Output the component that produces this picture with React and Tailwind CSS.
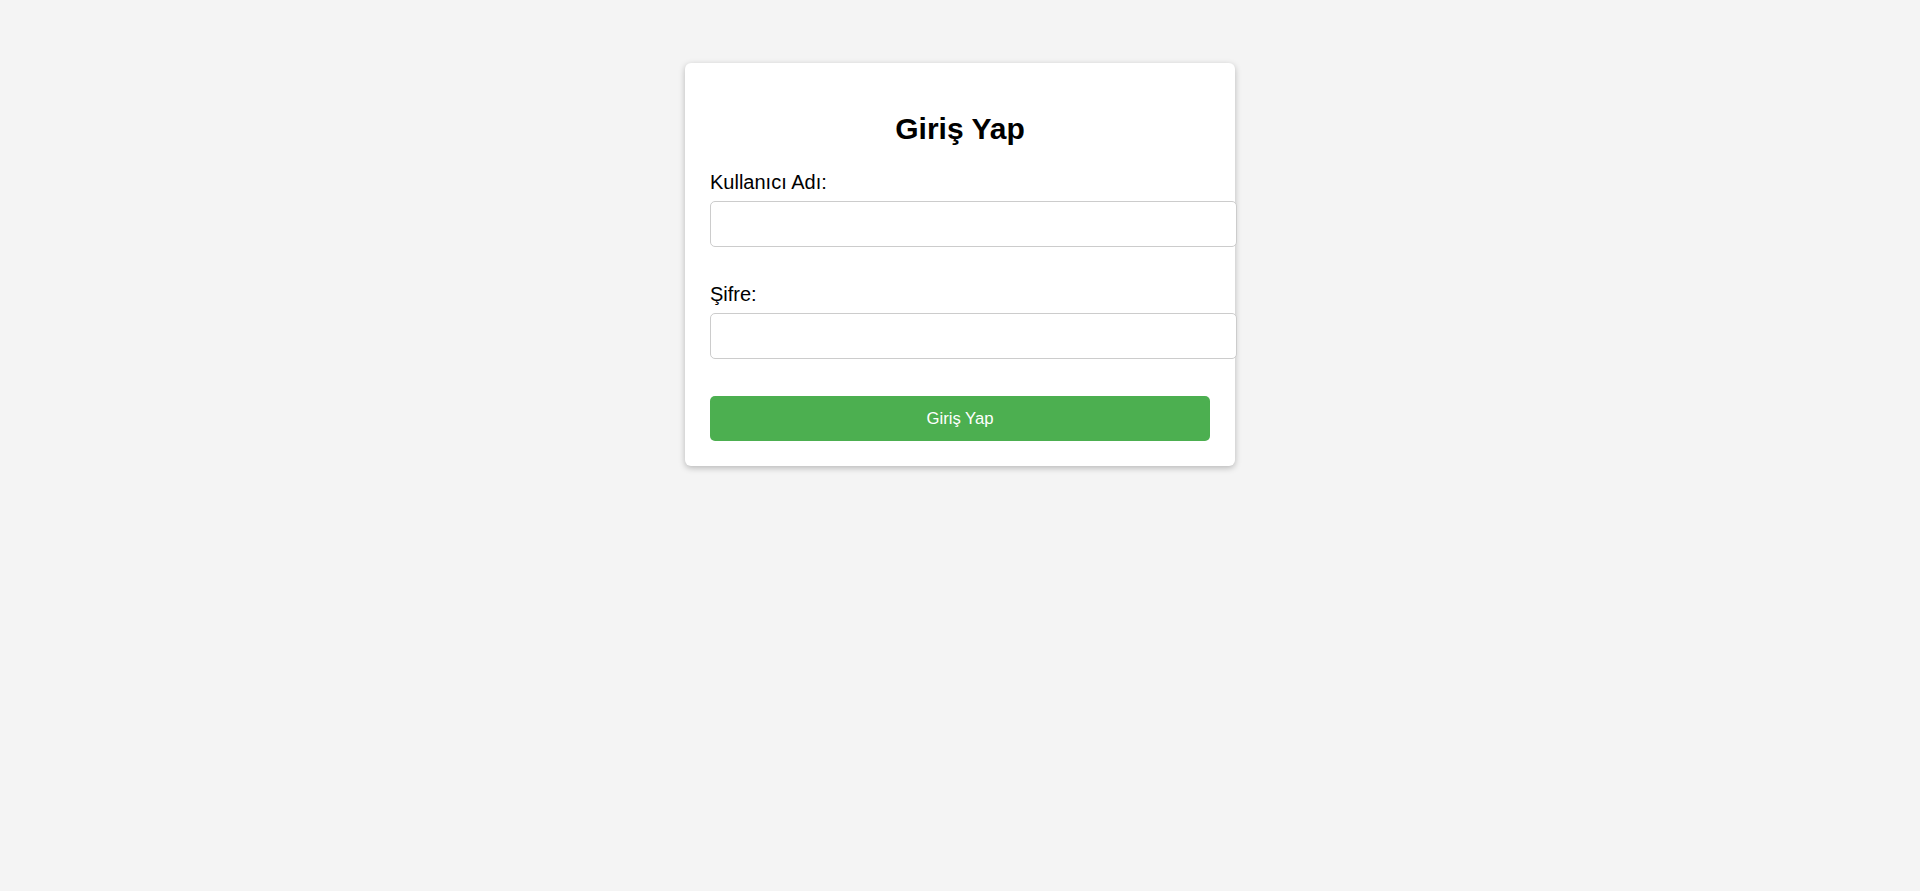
export default function App() {
  return (
    <div className="min-h-[891px] w-full bg-[#f4f4f4] pt-[63px]" style={{ fontFamily: '"Liberation Sans", Arial, sans-serif' }}>
      <div className="mx-auto w-[550px] rounded-[6px] bg-white px-[25px] pt-[25px] pb-[25px] shadow-[0_2px_6px_rgba(0,0,0,0.25)]">
        <h2 className="mt-[24px] mb-[25px] text-center text-[30px] font-bold leading-[34px] text-black">Giriş Yap</h2>
        <form onSubmit={(e) => e.preventDefault()}>
          <label className="mb-[7px] block text-[20px] leading-[23px] text-black">Kullanıcı Adı:</label>
          <input type="text" className="mb-[36px] block h-[46px] w-[527px] rounded-[5px] border border-[#cccccc] bg-white px-[12px] text-[17px] outline-none" />
          <label className="mb-[7px] block text-[20px] leading-[23px] text-black">Şifre:</label>
          <input type="password" className="mb-[37px] block h-[46px] w-[527px] rounded-[5px] border border-[#cccccc] bg-white px-[12px] text-[17px] outline-none" />
          <button type="submit" className="block h-[45px] w-[500px] rounded-[5px] bg-[#4caf50] text-[16.7px] text-white">Giriş Yap</button>
        </form>
      </div>
    </div>
  );
}
